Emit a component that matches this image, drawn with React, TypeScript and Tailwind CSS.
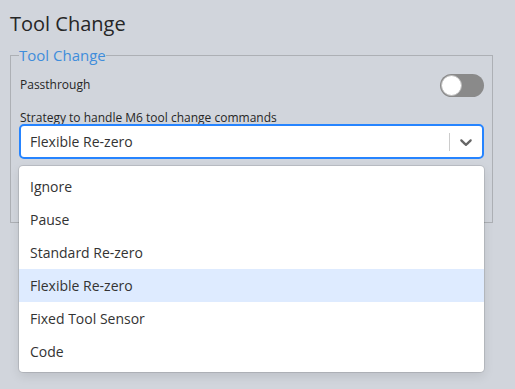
import React from "react";

const options = ["Ignore", "Pause", "Standard Re-zero", "Flexible Re-zero", "Fixed Tool Sensor", "Code"];

export default function App() {
  return (
    <div
      className="w-[515px] h-[389px] bg-[#d1d5dc] overflow-hidden text-[#333333]"
      style={{ fontFamily: '"Open Sans", "Noto Sans", sans-serif' }}
    >
      <div className="pl-[10px] pt-[7px] w-[493px]">
        <h1 className="text-[20px] leading-[33px] text-[#262626]">Tool Change</h1>
        <fieldset className="mt-[6px] border border-[#adb0b5] pl-[8px] pr-[8px] pb-[8px] min-w-0 relative h-[177px]">
          <legend className="text-[15px] leading-[18px] text-[#3f8ddb] px-0">Tool Change</legend>
          <div className="flex items-center justify-between h-[26px] mt-[8px]">
            <span className="text-[12px] text-[#262626] pl-[1px]">Passthrough</span>
            <div className="w-[44px] h-[23px] rounded-full bg-[#8a8a8a] relative">
              <div className="absolute left-[1px] top-[1px] w-[21px] h-[21px] rounded-full bg-white border border-[#bdbdbd]" />
            </div>
          </div>
          <div className="text-[12px] leading-[12px] mt-[14px] pl-[1px] text-[#262626]">Strategy to handle M6 tool change commands</div>
          <div className="relative mt-0">
            <div className="h-[35px] bg-white border-2 border-[#2684ff] rounded-[5px] flex items-center">
              <span className="flex-1 pl-[9px] text-[14px] text-[#333333]">Flexible Re-zero</span>
              <div className="w-px h-[18px] bg-[#cccccc]" />
              <div className="w-[32px] flex items-center justify-center">
                <svg width="20" height="20" viewBox="0 0 20 20" fill="#666666">
                  <path d="M4.516 7.548c0.436-0.446 1.043-0.481 1.576 0l3.908 3.747 3.908-3.747c0.533-0.481 1.141-0.446 1.574 0 0.436 0.445 0.408 1.197 0 1.615-0.406 0.418-4.695 4.502-4.695 4.502-0.217 0.223-0.502 0.335-0.787 0.335s-0.57-0.112-0.789-0.335c0 0-4.287-4.084-4.695-4.502s-0.436-1.17 0-1.615z" />
                </svg>
              </div>
            </div>
            <div className="absolute left-0 right-0 top-[42px] bg-white rounded-[4px] py-[4px] shadow-[0_0_0_1px_rgba(0,0,0,0.1),0_4px_11px_rgba(0,0,0,0.1)] z-10">
              {options.map((o) => (
                <div
                  key={o}
                  className={
                    "h-[33px] flex items-center pl-[11px] text-[14px] text-[#333333] " +
                    (o === "Flexible Re-zero" ? "bg-[#deebff]" : "")
                  }
                >
                  {o}
                </div>
              ))}
            </div>
          </div>
        </fieldset>
      </div>
    </div>
  );
}
